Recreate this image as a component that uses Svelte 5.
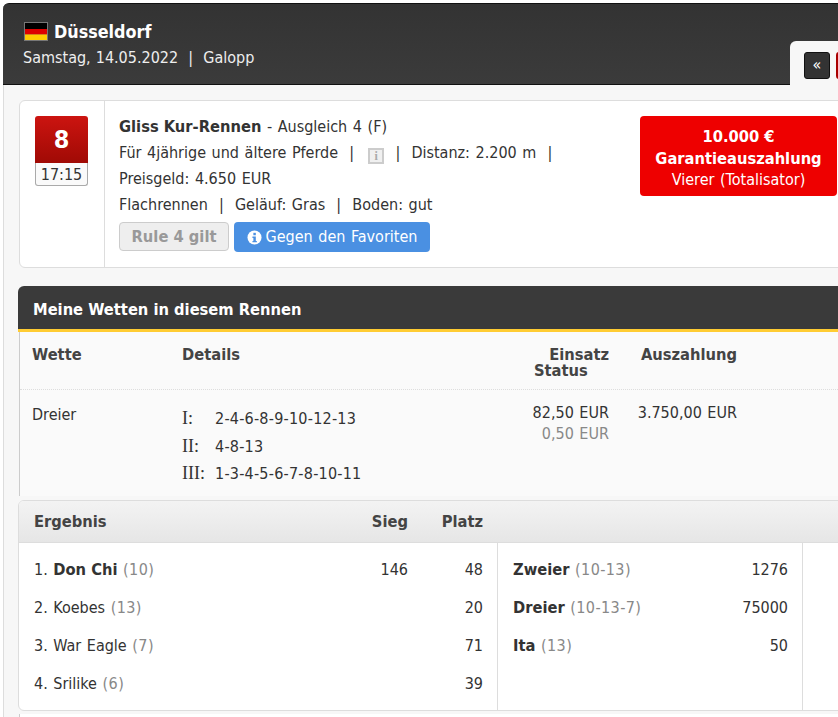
<script>
  const places = [
    { n: '1.', name: 'Don Chi', no: '(10)', sieg: '146', platz: '48', win: true },
    { n: '2.', name: 'Koebes', no: '(13)', sieg: '', platz: '20' },
    { n: '3.', name: 'War Eagle', no: '(7)', sieg: '', platz: '71' },
    { n: '4.', name: 'Srilike', no: '(6)', sieg: '', platz: '39' }
  ];
  const exotics = [
    { name: 'Zweier', no: '(10-13)', val: '1276' },
    { name: 'Dreier', no: '(10-13-7)', val: '75000' },
    { name: 'Ita', no: '(13)', val: '50' }
  ];
</script>

<div class="page">
  <div class="inner">
    <header class="head">
      <div class="head-text">
        <h1>
          <svg class="flag" width="24" height="19" viewBox="0 0 24 19">
            <rect width="24" height="19" fill="#777" />
            <rect x="1" y="1" width="22" height="6" fill="#000" />
            <rect x="1" y="7" width="22" height="5.5" fill="#d00" />
            <rect x="1" y="12.5" width="22" height="5.5" fill="#fc0" />
          </svg>
          Düsseldorf
        </h1>
        <div class="sub">Samstag, 14.05.2022 &nbsp;|&nbsp; Galopp</div>
      </div>
      <div class="tab">
        <span class="prev">«</span>
        <span class="next"></span>
      </div>
    </header>

    <div class="content">
      <section class="race">
        <div class="race-no">
          <div class="badge">
            <div class="num">8</div>
            <div class="time">17:15</div>
          </div>
        </div>
        <div class="race-info">
          <div class="line"><b>Gliss Kur-Rennen</b> - Ausgleich 4 (F)</div>
          <div class="line">Für 4jährige und ältere Pferde &nbsp;|&nbsp; <span class="mini">i</span> &nbsp;|&nbsp; Distanz: 2.200 m &nbsp;|</div>
          <div class="line">Preisgeld: 4.650 EUR</div>
          <div class="line">Flachrennen &nbsp;|&nbsp; Geläuf: Gras &nbsp;|&nbsp; Boden: gut</div>
          <div class="tags">
            <span class="rule">Rule 4 gilt</span>
            <span class="fav">
              <svg width="15" height="15" viewBox="0 0 16 16">
                <circle cx="8" cy="8" r="7.5" fill="#fff" />
                <rect x="6.8" y="3" width="2.6" height="2.6" fill="#4a90e2" />
                <path d="M5.8 7h3.6v4.6h1.1V13H5.8v-1.4h1V8.4h-1z" fill="#4a90e2" />
              </svg>
              Gegen den Favoriten
            </span>
          </div>
        </div>
        <div class="promo">
          <b>10.000 €</b>
          <b>Garantieauszahlung</b>
          <span>Vierer (Totalisator)</span>
        </div>
      </section>

      <section class="bets">
        <h2>Meine Wetten in diesem Rennen</h2>
        <div class="bets-body">
          <div class="bets-row bets-head">
            <div>Wette</div>
            <div>Details</div>
            <div class="stake"><div class="ein">Einsatz</div><div class="status">Status</div></div>
            <div class="pay">Auszahlung</div>
          </div>
          <div class="bets-row bets-data">
            <div class="type">Dreier</div>
            <div class="details">
              <div><span class="rank">I:</span>2-4-6-8-9-10-12-13</div>
              <div><span class="rank">II:</span>4-8-13</div>
              <div><span class="rank">III:</span>1-3-4-5-6-7-8-10-11</div>
            </div>
            <div class="stake-val"><div>82,50 EUR</div><div class="muted">0,50 EUR</div></div>
            <div class="pay-val">3.750,00 EUR</div>
          </div>
        </div>
      </section>

      <section class="result">
        <div class="res-head">
          <div class="c-name">Ergebnis</div>
          <div class="c-sieg">Sieg</div>
          <div class="c-platz">Platz</div>
        </div>
        <div class="res-body">
          <div class="col-a">
            {#each places as p}
              <div class="res-row">
                <div class="c-name">{p.n} {#if p.win}<b>{p.name}</b>{:else}{p.name}{/if} <span class="muted no">{p.no}</span></div>
                <div class="c-sieg">{p.sieg}</div>
                <div class="c-platz">{p.platz}</div>
              </div>
            {/each}
          </div>
          <div class="col-b">
            {#each exotics as e}
              <div class="res-row">
                <div class="e-name"><b>{e.name}</b> <span class="muted no">{e.no}</span></div>
                <div class="e-val">{e.val}</div>
              </div>
            {/each}
          </div>
          <div class="col-c"></div>
        </div>
      </section>
      <div class="next-card"></div>
    </div>
  </div>
</div>

<style>
  :global(body) { margin: 0; background: #fff; overflow: hidden; }
  .page {
    width: 838px; height: 717px; overflow: hidden;
    font: 16px/26px "DejaVu Sans Condensed", "DejaVu Sans", sans-serif;
    word-spacing: 1px;
    color: #333;
  }
  b, h2, .rule, .res-head, .bets-head { font-size: 16.35px; word-spacing: 0; }
  .inner { width: 900px; padding: 3px 0 0 3px; box-sizing: border-box; }
  .head {
    display: flex; justify-content: space-between; align-items: flex-end;
    height: 82px; box-sizing: border-box;
    background: linear-gradient(#333, #3b3b3b);
    border-top: 1px solid #111; border-bottom: 1px solid #111;
    border-radius: 6px 6px 0 0;
    color: #fff;
    width: 100%;
  }
  .head-text { align-self: flex-start; padding: 14px 0 0 20px; }
  h1 { margin: 0; font-size: 17.8px; line-height: 27px; font-weight: bold; display: flex; align-items: center; gap: 6px; padding-left: 1px; word-spacing: 0; }
  .sub { color: #eee; line-height: 26px; word-spacing: .5px; }
  .tab {
    width: 110px; height: 44px; margin-bottom: -1px;
    background: #f7f7f7; border-radius: 6px 0 0 0;
    display: flex; align-items: flex-start; gap: 6px; padding: 11px 0 0 14px; box-sizing: border-box;
  }
  .prev {
    width: 26px; height: 27px; box-sizing: border-box; background: #333; border: 1px solid #111;
    border-radius: 3px; color: #fff; text-align: center; line-height: 24px; font-size: 16px;
  }
  .next { width: 26px; height: 27px; background: #a00; border-radius: 3px; }
  .content {
    background: #f7f7f7; border-left: 1px solid #ddd; padding: 15px 0 0 14px;
  }
  .race {
    display: flex; height: 168px; box-sizing: border-box; background: #fff; margin-left: 1px;
    border: 1px solid #ddd; border-radius: 6px; margin-bottom: 18px;
  }
  .race-no { width: 85px; flex: none; border-right: 1px solid #ddd; box-sizing: border-box; padding: 15px 0 0 15px; }
  .badge { width: 53px; text-align: center; }
  .num {
    height: 47px; box-sizing: border-box; background: linear-gradient(#cc1410, #a00a05);
    border-radius: 3px 3px 0 0; color: #fff; font-weight: bold; font-size: 25px; line-height: 47px;
  }
  .time {
    height: 23px; box-sizing: border-box; border: 1px solid #aaa; border-top: 0; border-radius: 0 0 3px 3px;
    background: #fafafa; line-height: 23px; font-size: 16px; word-spacing: 0;
  }
  .race-info { padding: 13px 0 0 14px; flex: none; width: 535px; box-sizing: border-box; }
  .line { height: 26px; white-space: nowrap; }
  .mini {
    display: inline-block; width: 16px; height: 16px; box-sizing: border-box; border: 2px solid #ccc; background: #f0f0f0;
    color: #aaa; font: bold 12px/12px "Liberation Serif", serif; text-align: center; vertical-align: -2px; margin-left: 3px;
  }
  .tags { display: flex; gap: 5px; margin-top: 4px; align-items: flex-start; }
  .rule {
    width: 110px; height: 29px; box-sizing: border-box; background: #eee; border: 1px solid #ccc; border-radius: 4px;
    color: #999; font-weight: bold; text-align: center; line-height: 28px;
  }
  .fav {
    width: 196px; height: 30px; background: #4a90e2; border-radius: 4px; color: #fff;
    display: flex; align-items: center; justify-content: center; gap: 4px;
  }
  .promo {
    width: 197px; height: 80px; margin: 15px 0 0 0; background: #e00; border-radius: 4px;
    color: #fff; display: flex; flex-direction: column; align-items: center; padding-top: 10px; box-sizing: border-box; line-height: 21.5px;
  }
  .bets h2 {
    margin: 0; height: 46px; box-sizing: border-box; background: #3a3a3a; border-bottom: 3px solid #fc3;
    border-radius: 6px 6px 0 0; color: #fff; line-height: 47px; padding-left: 15px; font-weight: bold;
  }
  .bets-body { margin-left: 1px; border-left: 1px solid #ccc; background: #fafafa; }
  .bets-row { display: grid; grid-template-columns: 150px 300px 127px 128px; padding-left: 12px; }
  .bets-head { height: 58px; box-sizing: border-box; border-bottom: 1px dotted #ddd; font-weight: bold; color: #444; padding-top: 13px; line-height: 16px; }
  .bets-head > div { padding-top: 2px; }
  .ein { text-align: right; }
  .status { padding-left: 52px; }
  .pay { text-align: right; }
  .bets-data { height: 106px; box-sizing: border-box; padding-top: 10px; }
  .type { padding-top: 2px; }
  .details { padding-top: 5px; line-height: 27.6px; letter-spacing: .22px; }
  .rank { display: inline-block; width: 33px; font-family: "Liberation Serif", serif; font-size: 18px; letter-spacing: 0; }
  .stake-val { text-align: right; line-height: 21px; padding-top: 2px; }
  .pay-val { text-align: right; line-height: 21px; padding-top: 2px; }
  .muted { color: #888; }
  .no { letter-spacing: .4px; }
  .result { margin-top: 4px; border: 1px solid #ddd; border-radius: 6px; background: #fff; height: 211px; box-sizing: border-box; overflow: hidden; }
  .res-head {
    display: flex; height: 42px; box-sizing: border-box; padding-left: 15px; background: linear-gradient(#f3f3f3, #e6e6e6);
    border-bottom: 1px solid #ddd; font-weight: bold; line-height: 41px; color: #444;
  }
  .c-name { width: 299px; }
  .c-sieg { width: 75px; text-align: right; }
  .c-platz { width: 75px; text-align: right; }
  .res-body { display: flex; height: 168px; }
  .col-a { width: 479px; box-sizing: border-box; padding: 8px 0 0 15px; border-right: 1px solid #ddd; }
  .col-b { width: 305px; box-sizing: border-box; padding: 8px 14px 0 15px; border-right: 1px solid #ddd; }
  .res-row { display: flex; height: 38px; line-height: 38px; }
  .e-name { flex: 1; }
  .e-val { text-align: right; }
  .next-card { height: 30px; margin: 3px 0 0 1px; border-left: 1px solid #ccc; background: #fff; }
</style>
